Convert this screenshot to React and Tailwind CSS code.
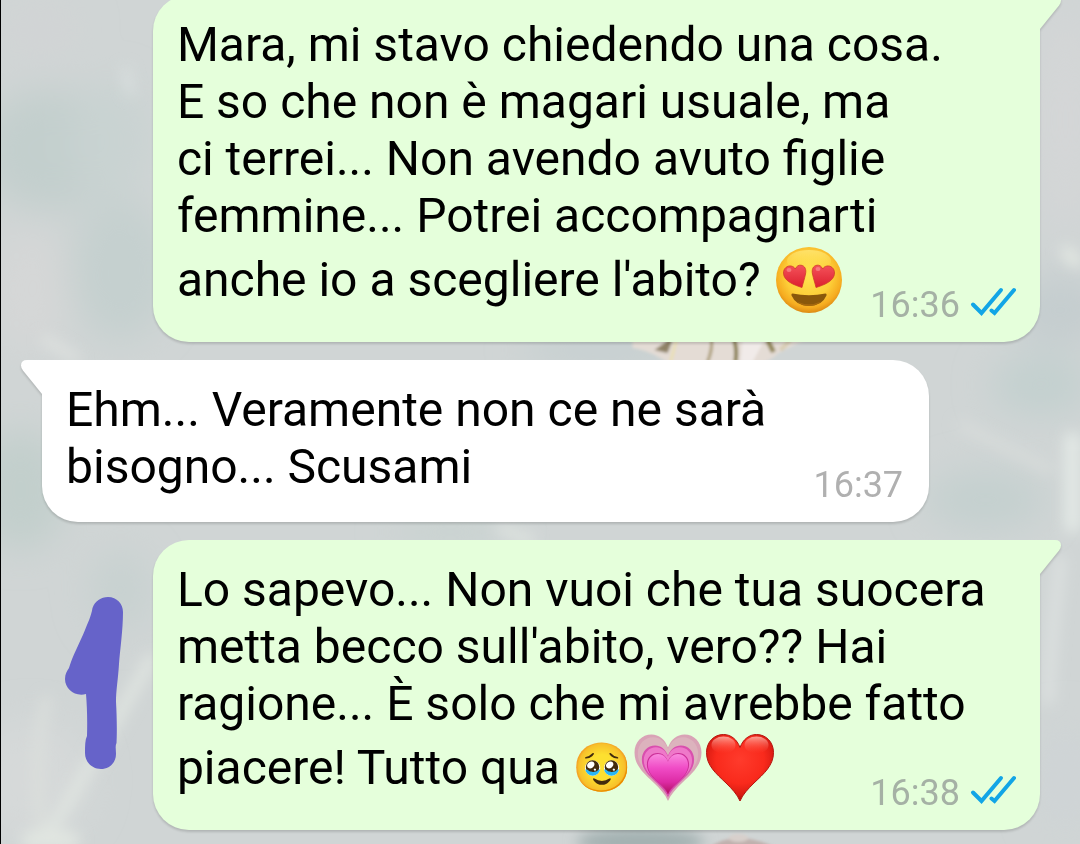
function Wallpaper() {
  return (
    <svg
      aria-hidden="true"
      viewBox="0 0 1080 844"
      preserveAspectRatio="xMidYMid slice"
      className="pointer-events-none absolute inset-0 h-full w-full"
    >
      <defs>
        <filter id="soft" x="-50%" y="-50%" width="200%" height="200%">
          <feGaussianBlur stdDeviation="18" />
        </filter>
        <filter id="mist" x="-50%" y="-50%" width="200%" height="200%">
          <feGaussianBlur stdDeviation="7" />
        </filter>
        <filter id="petal" x="-20%" y="-20%" width="140%" height="140%">
          <feGaussianBlur stdDeviation="1.5" />
        </filter>
      </defs>
      <rect width="1080" height="844" fill="#d0d5d5" />
      <g filter="url(#soft)">
        <ellipse cx="50" cy="150" rx="70" ry="60" fill="#c3cfcd" />
        <ellipse cx="120" cy="270" rx="50" ry="70" fill="#c5d0cf" />
        <ellipse cx="110" cy="140" rx="40" ry="60" fill="#c9d3d2" />
        <ellipse cx="40" cy="30" rx="40" ry="30" fill="#d1d4d5" />
        <ellipse cx="30" cy="290" rx="40" ry="60" fill="#d5d7d7" />
        <ellipse cx="20" cy="490" rx="45" ry="60" fill="#c2cfcc" />
        <ellipse cx="120" cy="590" rx="30" ry="40" fill="#c7d1d0" />
        <ellipse cx="30" cy="780" rx="60" ry="60" fill="#d6d9d9" />
        <ellipse cx="1065" cy="120" rx="30" ry="110" fill="#d4d6d7" />
        <ellipse cx="1060" cy="310" rx="50" ry="36" fill="#c5cdcf" />
        <ellipse cx="1040" cy="385" rx="50" ry="30" fill="#c3d0cf" />
        <ellipse cx="985" cy="500" rx="60" ry="30" fill="#c4d0cf" />
        <ellipse cx="1065" cy="780" rx="30" ry="60" fill="#cfd4d6" />
        <ellipse cx="600" cy="350" rx="80" ry="14" fill="#c3cecf" />
        <ellipse cx="450" cy="532" rx="60" ry="12" fill="#c6d2cf" />
      </g>
      <g filter="url(#mist)" fill="none" strokeLinecap="round">
        <path d="M46 836 Q70 800 150 660" stroke="#dfe4e0" strokeWidth="12" />
        <path d="M42 836 Q30 760 46 700" stroke="#dbdfdc" strokeWidth="9" />
        <path d="M30 840 H70" stroke="#e1e6e1" strokeWidth="18" />
        <path d="M1072 440 V525" stroke="#e3e9e6" strokeWidth="16" />
        <path d="M1060 560 Q1050 640 1048 700" stroke="#dfe3e2" strokeWidth="9" />
        <path d="M1076 262 L1066 252" stroke="#e4e9e3" strokeWidth="12" />
        <path d="M960 425 L1050 470" stroke="#d9dddb" strokeWidth="8" />
        <path d="M125 70 L130 92" stroke="#dbe1e1" strokeWidth="7" />
        <path d="M45 340 L75 358" stroke="#dfe2e0" strokeWidth="9" />
        <path d="M500 529 L530 540" stroke="#e0e5e1" strokeWidth="9" />
        <ellipse cx="640" cy="842" rx="64" ry="14" fill="#a3b1b1" />
      </g>
      <g filter="url(#petal)">
        <path d="M632 338 H808 L778 353 Q765 366 740 366 H672 Q650 350 632 348 Z" fill="#e4dcd5" />
        <path d="M668 340 L654 350 L667 353 L672 340 Z" fill="#8f8266" />
        <path d="M711 340 Q712 350 707 362" fill="none" stroke="#aa9b75" strokeWidth="3" />
        <path d="M733 338 Q737 348 735 362" fill="none" stroke="#8b8051" strokeWidth="4" />
        <path d="M742 340 L764 340 L752 362 H740 Z" fill="#f1ebe9" />
        <path d="M767 340 L773 352" stroke="#938759" strokeWidth="5" />
        <path d="M676 340 L670 362" stroke="#e9dfb6" strokeWidth="3" />
        <path d="M790 340 L780 350" stroke="#d9cdb2" strokeWidth="4" />
        <path d="M708 848 Q735 828 776 848 Z" fill="#c0b1ae" />
        <ellipse cx="738" cy="838" rx="10" ry="4" fill="#d8d0cc" />
      </g>
    </svg>
  );
}

function HeartEyes() {
  return (
    <svg role="img" aria-label="😍" viewBox="0 0 72 72" className="h-[72px] w-[72px] shrink-0">
      <defs>
        <radialGradient id="face" cx="50%" cy="42%" r="58%">
          <stop offset="0" stopColor="#ffe552" />
          <stop offset="0.6" stopColor="#fdce38" />
          <stop offset="0.86" stopColor="#f6ac20" />
          <stop offset="1" stopColor="#dd8a14" />
        </radialGradient>
        <linearGradient id="shine" x1="0" y1="0" x2="0" y2="1">
          <stop offset="0" stopColor="#ffeb80" stopOpacity="0.7" />
          <stop offset="1" stopColor="#ffe552" stopOpacity="0" />
        </linearGradient>
        <linearGradient id="eye" x1="0" y1="0" x2="0" y2="1">
          <stop offset="0" stopColor="#f4525a" />
          <stop offset="1" stopColor="#dc1f2e" />
        </linearGradient>
      </defs>
      <circle cx="36" cy="36" r="33" fill="url(#face)" />
      <ellipse cx="36" cy="17" rx="22" ry="11" fill="url(#shine)" />
      <path
        d="M29 43.500 C21 41 10.500 37 10.500 29 C10.500 24 14.500 21.500 18 22 C20 22.300 21.500 23.500 22.300 25 C23.300 22.500 25.500 20.800 28 21.200 C32 21.800 33.500 25.500 32.500 30 C31.500 35 30 39 29 43.500 Z"
        fill="url(#eye)"
        stroke="#cf3a2a"
        strokeWidth="0.8"
      />
      <path
        d="M43 43.500 C51 41 61.500 37 61.500 29 C61.500 24 57.500 21.500 54 22 C52 22.300 50.500 23.500 49.700 25 C48.700 22.500 46.500 20.800 44 21.200 C40 21.800 38.500 25.500 39.500 30 C40.500 35 42 39 43 43.500 Z"
        fill="url(#eye)"
        stroke="#cf3a2a"
        strokeWidth="0.8"
      />
      <ellipse cx="16" cy="26" rx="2.500" ry="2" fill="#fb8d90" opacity="0.7" />
      <ellipse cx="45" cy="25" rx="2.500" ry="2" fill="#fb8d90" opacity="0.7" />
      <path d="M19.500 49.500 Q36 53 52.500 49.500 Q54 49.500 53.500 51.500 Q49 62 36 62 Q23 62 18.500 51.500 Q18 49.500 19.500 49.500 Z" fill="#8a580b" />
      <path d="M24 57.500 Q36 63 48 57.500 Q43 62 36 62 Q29 62 24 57.500 Z" fill="#a5680e" />
    </svg>
  );
}

const HEART =
  "M36 69 C33 62 28 57 22 51 C12 41.500 2.500 33.500 2.500 20.500 C2.500 10 10 2.500 19.500 2.500 C27 2.500 33 7.500 36 15.500 C39 7.500 45 2.500 52.500 2.500 C62 2.500 69.500 10 69.500 20.500 C69.500 33.500 60 41.500 50 51 C44 57 39 62 36 69 Z";

function GrowingHeart() {
  return (
    <svg role="img" aria-label="💗" viewBox="0 0 72 72" className="h-[72px] w-[72px] shrink-0">
      <defs>
        <linearGradient id="pinkCore" x1="0" y1="0" x2="0" y2="1">
          <stop offset="0" stopColor="#f98ade" />
          <stop offset="0.35" stopColor="#f04cc6" />
          <stop offset="0.7" stopColor="#dd2ba5" />
          <stop offset="1" stopColor="#b0105f" />
        </linearGradient>
      </defs>
      <path d={HEART} fill="#d9a3b6" />
      <path d={HEART} fill="#dcb3bd" transform="translate(3.600 3) scale(0.9)" />
      <path d={HEART} fill="#d94fae" transform="translate(7.900 11.500) scale(0.78)" />
      <path d={HEART} fill="#ee79c9" transform="translate(10 13.500) scale(0.72)" />
      <path d={HEART} fill="#cc2f98" transform="translate(13.300 19.500) scale(0.63)" />
      <path d={HEART} fill="url(#pinkCore)" transform="translate(14.400 20.500) scale(0.6)" />
    </svg>
  );
}

function RedHeart() {
  return (
    <svg role="img" aria-label="❤️" viewBox="0 0 72 72" className="h-[72px] w-[72px] shrink-0">
      <defs>
        <radialGradient id="redEdge" cx="50%" cy="38%" r="60%">
          <stop offset="0" stopColor="#ff3b2c" />
          <stop offset="0.6" stopColor="#f92a1c" />
          <stop offset="0.88" stopColor="#d81b12" />
          <stop offset="1" stopColor="#ae0f0b" />
        </radialGradient>
        <linearGradient id="gloss" x1="0" y1="0" x2="0" y2="1">
          <stop offset="0" stopColor="#ffc0b5" stopOpacity="0.8" />
          <stop offset="1" stopColor="#ff4a3a" stopOpacity="0" />
        </linearGradient>
      </defs>
      <path d={HEART} fill="url(#redEdge)" stroke="#b5140e" strokeWidth="1" />
      <ellipse cx="19.500" cy="13" rx="12" ry="8.500" fill="url(#gloss)" />
      <ellipse cx="52.500" cy="13" rx="12" ry="8.500" fill="url(#gloss)" />
    </svg>
  );
}

function ReadTicks() {
  return (
    <svg
      role="img"
      aria-label="Letto"
      viewBox="0 0 46 30"
      className="mb-[9px] h-[30px] w-[46px]"
      fill="none"
      stroke="#12a5e6"
      strokeWidth="4"
      strokeLinecap="round"
      strokeLinejoin="miter"
    >
      <path d="M3 17.500 L11.500 26 L31 3" />
      <path d="M21.500 23.500 L24.500 26 L44 3" />
    </svg>
  );
}

function DrawnOne() {
  return (
    <svg
      role="img"
      aria-label="1"
      viewBox="65 597 58 173"
      className="mt-[57px] ml-[23px] h-[173px] w-[58px] shrink-0"
      fill="#6663c9"
    >
      <path d="M92.500 608 C95 601 101 597 108 597 C117 597 123 604 123 612 C123 630 120 650 119 664 C118 680 116 690 116 702 C117 718 117 735 116.500 743 C115 746 116 750 116 754 C116 763 109 769 101 769 C92 769 85 762 85 753 C85 746 85 740 87 736 C87.500 720 87 706 86 694 C75 697 65 689 65 679 C65 674 67 671 69 668 C72 657 80 642 85 630 C88 622 91 617 92.500 608 Z" />
    </svg>
  );
}

function Tail({ sent }) {
  return (
    <svg
      aria-hidden="true"
      viewBox="0 0 22 35"
      className={
        sent
          ? "absolute top-0 left-full h-[35px] w-[22px] fill-[#e5ffdb]"
          : "absolute top-0 right-full h-[35px] w-[22px] -scale-x-100 fill-white"
      }
    >
      <path d="M-1 0 H15 Q21 0 21 5.500 Q21 8 19 10.500 L0 34 H-1 Z" />
    </svg>
  );
}

function Bubble({ sent, time, children, last }) {
  return (
    <article
      className={
        sent
          ? "relative ml-auto w-8/9 shrink-0 rounded-[36px] rounded-tr-none bg-[#e5ffdb] px-6 pt-[21px] pb-4 drop-shadow-[0_2px_1px_rgba(0,0,0,0.15)]"
          : "relative w-8/9 shrink-0 rounded-[36px] rounded-tl-none bg-white px-6 pt-[21px] pb-4 drop-shadow-[0_2px_1px_rgba(0,0,0,0.15)]"
      }
    >
      <Tail sent={sent} />
      <p>{children}</p>
      <div className="flex items-end justify-between">
        <p className="flex items-center pb-[11px] whitespace-pre">{last}</p>
        <footer
          className={
            sent
              ? "flex items-end gap-2.5 text-[36px] leading-[42px] text-[#a5b1a5]"
              : "flex items-end pr-0.5 text-[36px] leading-[42px] text-[#b0b0b0]"
          }
        >
          <time>{time}</time>
          {sent && <ReadTicks />}
        </footer>
      </div>
    </article>
  );
}

export default function App() {
  return (
    <main className="relative min-h-screen overflow-hidden border-l border-black bg-[#d0d5d5] font-[Roboto,sans-serif] text-[48px] leading-[57px] text-black">
      <Wallpaper />
      <div className="relative -mt-[5px] flex flex-col gap-[18px] pr-10 pb-3.5 pl-[41px]">
        <Bubble
          sent
          time="16:36"
          last={
            <>
              <span className="leading-[71px]">anche io a scegliere l'abito? </span>
              <span className="-my-2 flex"><HeartEyes /></span>
            </>
          }
        >
          Mara, mi stavo chiedendo una cosa.
          <br />E so che non è magari usuale, ma
          <br />ci terrei... Non avendo avuto figlie
          <br />femmine... Potrei accompagnarti
        </Bubble>
        <Bubble time="16:37" last="bisogno... Scusami">
          Ehm... Veramente non ce ne sarà
        </Bubble>
        <div className="flex items-start">
          <DrawnOne />
          <Bubble
            sent
            time="16:38"
            last={
              <>
                <span className="leading-[71px]">piacere! Tutto qua 🥹</span>
                <span className="-my-2 flex"><GrowingHeart /><RedHeart /></span>
              </>
            }
          >
            Lo sapevo... Non vuoi che tua suocera
            <br />metta becco sull'abito, vero?? Hai
            <br />ragione... È solo che mi avrebbe fatto
          </Bubble>
        </div>
      </div>
    </main>
  );
}
